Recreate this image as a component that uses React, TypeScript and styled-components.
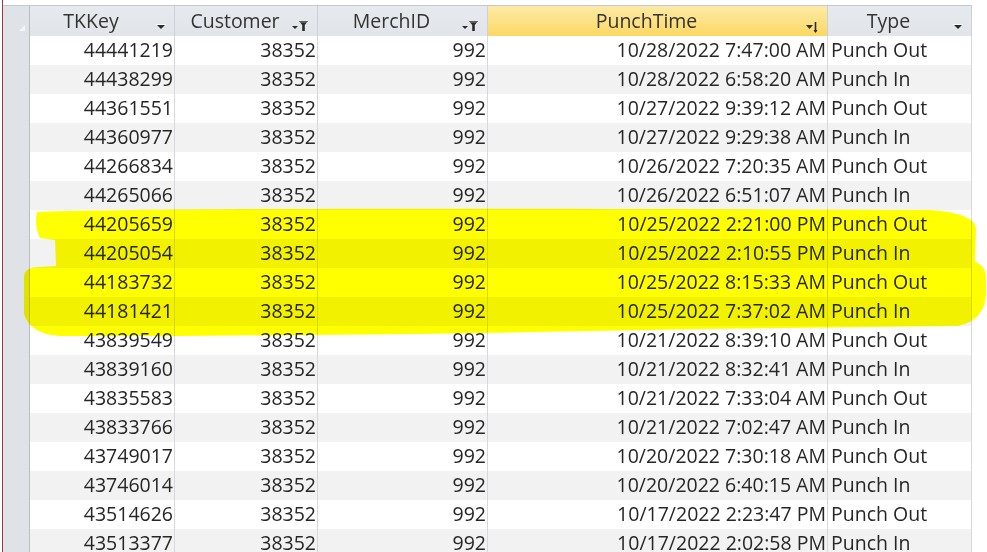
import styled, { createGlobalStyle } from 'styled-components';

const GlobalStyle = createGlobalStyle`
  html, body {
    margin: 0;
    padding: 0;
    background: #ffffff;
    overflow: hidden;
  }
  body {
    font-family: "Open Sans", "Liberation Sans", sans-serif;
  }
`;

type Punch = {
  key: string;
  customer: string;
  merch: string;
  time: string;
  type: string;
};

const rows: Punch[] = [
  { key: '44441219', customer: '38352', merch: '992', time: '10/28/2022 7:47:00 AM', type: 'Punch Out' },
  { key: '44438299', customer: '38352', merch: '992', time: '10/28/2022 6:58:20 AM', type: 'Punch In' },
  { key: '44361551', customer: '38352', merch: '992', time: '10/27/2022 9:39:12 AM', type: 'Punch Out' },
  { key: '44360977', customer: '38352', merch: '992', time: '10/27/2022 9:29:38 AM', type: 'Punch In' },
  { key: '44266834', customer: '38352', merch: '992', time: '10/26/2022 7:20:35 AM', type: 'Punch Out' },
  { key: '44265066', customer: '38352', merch: '992', time: '10/26/2022 6:51:07 AM', type: 'Punch In' },
  { key: '44205659', customer: '38352', merch: '992', time: '10/25/2022 2:21:00 PM', type: 'Punch Out' },
  { key: '44205054', customer: '38352', merch: '992', time: '10/25/2022 2:10:55 PM', type: 'Punch In' },
  { key: '44183732', customer: '38352', merch: '992', time: '10/25/2022 8:15:33 AM', type: 'Punch Out' },
  { key: '44181421', customer: '38352', merch: '992', time: '10/25/2022 7:37:02 AM', type: 'Punch In' },
  { key: '43839549', customer: '38352', merch: '992', time: '10/21/2022 8:39:10 AM', type: 'Punch Out' },
  { key: '43839160', customer: '38352', merch: '992', time: '10/21/2022 8:32:41 AM', type: 'Punch In' },
  { key: '43835583', customer: '38352', merch: '992', time: '10/21/2022 7:33:04 AM', type: 'Punch Out' },
  { key: '43833766', customer: '38352', merch: '992', time: '10/21/2022 7:02:47 AM', type: 'Punch In' },
  { key: '43749017', customer: '38352', merch: '992', time: '10/20/2022 7:30:18 AM', type: 'Punch Out' },
  { key: '43746014', customer: '38352', merch: '992', time: '10/20/2022 6:40:15 AM', type: 'Punch In' },
  { key: '43514626', customer: '38352', merch: '992', time: '10/17/2022 2:23:47 PM', type: 'Punch Out' },
  { key: '43513377', customer: '38352', merch: '992', time: '10/17/2022 2:02:58 PM', type: 'Punch In' },
];

const COLS = '27px 145px 143px 170px 340px 144px';

function DropArrow() {
  return (
    <svg width="10" height="6" viewBox="0 0 10 6">
      <path d="M1 1 H9 L5 5 Z" fill="#2b2b2b" />
      <path d="M0 0.5 H10" stroke="#ffffff" strokeWidth="1" />
    </svg>
  );
}

function FilterArrow() {
  return (
    <svg width="18" height="12" viewBox="0 0 18 12">
      <path d="M1 6 H7 L4 9 Z" fill="#2b2b2b" />
      <path d="M8 1 H17 L13.8 5 V11 L11.2 11 V5 Z" fill="#2b2b2b" />
      <path d="M9 2 H16" stroke="#8f8f8f" strokeWidth="1" />
    </svg>
  );
}

function SortArrow() {
  return (
    <svg width="14" height="13" viewBox="0 0 14 13">
      <path d="M1 4 H8 L4.5 8 Z" fill="#2b2b2b" />
      <path d="M10.5 1 V11" stroke="#2b2b2b" strokeWidth="1.6" />
      <path d="M8.5 9 H12.5 L10.5 12 Z" fill="#2b2b2b" />
    </svg>
  );
}

export default function App() {
  return (
    <Page>
      <GlobalStyle />
      <Sheet>
        <HeaderRow>
          <Corner>
            <CornerMark />
          </Corner>
          <HeadCell>
            <HeadLabel>TKKey</HeadLabel>
            <Glyph $top={18}><DropArrow /></Glyph>
          </HeadCell>
          <HeadCell>
            <HeadLabel>Customer</HeadLabel>
            <Glyph $top={14}><FilterArrow /></Glyph>
          </HeadCell>
          <HeadCell>
            <HeadLabel>MerchID</HeadLabel>
            <Glyph $top={14}><FilterArrow /></Glyph>
          </HeadCell>
          <HeadCell $active>
            <HeadLabel>PunchTime</HeadLabel>
            <Glyph $top={15}><SortArrow /></Glyph>
          </HeadCell>
          <HeadCell>
            <HeadLabel>Type</HeadLabel>
            <Glyph $top={18}><DropArrow /></Glyph>
          </HeadCell>
        </HeaderRow>
        {rows.map((r, i) => (
          <DataRow key={r.key} $alt={i % 2 === 1}>
            <Selector />
            <Cell $align="right">{r.key}</Cell>
            <Cell $align="right">{r.customer}</Cell>
            <Cell $align="right">{r.merch}</Cell>
            <Cell $align="right">{r.time}</Cell>
            <Cell $align="left">{r.type}</Cell>
          </DataRow>
        ))}
      </Sheet>
      <Highlight width="987" height="552" viewBox="0 0 987 552">
        <path
          d="M37 212 C 200 207 600 209 930 210 Q 974 213 976 228 L 975 262 Q 984 264 986 276 L 986 292
             Q 986 320 958 326 L 700 329 L 420 334 L 180 336 L 60 336 Q 30 334 24 314 L 24 276
             Q 25 267 40 267 L 56 266 L 55 240 L 40 238 Q 34 226 37 212 Z"
          fill="#ffff00"
        />
      </Highlight>
    </Page>
  );
}

const Page = styled.div`
  position: relative;
  width: 987px;
  height: 552px;
  overflow: hidden;
  padding: 5px 0 0 2px;
  box-sizing: border-box;
  &::before {
    content: '';
    position: absolute;
    left: 2px;
    top: 0;
    bottom: 0;
    width: 1px;
    background: #a1343f;
  }
`;

const Sheet = styled.div`
  display: flex;
  flex-direction: column;
  align-items: flex-start;
  color: #262626;
  font-size: 19.5px;
`;

const HeaderRow = styled.div`
  display: grid;
  grid-template-columns: ${COLS};
  height: 30px;
  border-top: 1px solid #c5c9cf;
  margin-left: 1px;
`;

const Corner = styled.div`
  position: relative;
  background: #dfe2e7;
  border-right: 1px solid #b9bec6;
`;

const CornerMark = styled.div`
  position: absolute;
  left: 16px;
  top: 19px;
  width: 0;
  height: 0;
  border-left: 6px solid transparent;
  border-bottom: 6px solid #f4f5f7;
`;

const HeadCell = styled.div<{ $active?: boolean }>`
  position: relative;
  display: flex;
  align-items: center;
  justify-content: center;
  padding-right: 22px;
  background: ${(p) =>
    p.$active ? 'linear-gradient(#fdeaa8, #fcd862)' : 'linear-gradient(#e6e9ed, #e1e4e8)'};
  border-right: 1px solid #cdd1d7;
  color: #333333;
`;

const HeadLabel = styled.span`
  line-height: 30px;
  margin-top: -1px;
`;

const Glyph = styled.span<{ $top: number }>`
  position: absolute;
  right: 8px;
  top: ${(p) => p.$top}px;
  display: flex;
`;

const DataRow = styled.div<{ $alt: boolean }>`
  display: grid;
  grid-template-columns: ${COLS};
  height: 29px;
  margin-left: 1px;
  background: ${(p) => (p.$alt ? '#f2f2f2' : '#ffffff')};
`;

const Selector = styled.div`
  background: #dfe2e7;
  border-right: 1px solid #b9bec6;
  border-bottom: 1px solid #eef0f2;
`;

const Cell = styled.div<{ $align: 'left' | 'right' }>`
  display: flex;
  align-items: center;
  justify-content: ${(p) => (p.$align === 'right' ? 'flex-end' : 'flex-start')};
  padding: 0 1px 1px 3px;
  border-right: 1px solid #d5d9de;
  border-bottom: 1px solid #d5d9de;
  white-space: nowrap;
  line-height: 28px;
`;

const Highlight = styled.svg`
  position: absolute;
  left: 0;
  top: 0;
  pointer-events: none;
  mix-blend-mode: multiply;
`;
